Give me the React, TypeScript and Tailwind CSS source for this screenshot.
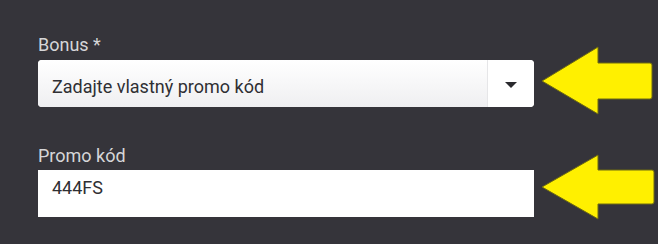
function Arrows() {
  return (
    <svg
      className="pointer-events-none absolute left-0 top-0"
      width="658"
      height="244"
      viewBox="0 0 658 244"
      aria-hidden="true"
    >
      <path
        d="M542 81 L598 47 L598 63 L650 63 Q652 63 652 65 L652 97 Q652 99 650 99 L598 99 L598 114 Z"
        fill="#fff000"
        stroke="#6e6a10"
        strokeWidth="1"
        strokeLinejoin="round"
      />
      <path
        d="M542 187 L598 155 L598 170 L652 170 Q654 170 654 172 L654 202 Q654 204 652 204 L598 204 L598 219 Z"
        fill="#fff000"
        stroke="#6e6a10"
        strokeWidth="1"
        strokeLinejoin="round"
      />
    </svg>
  );
}

export default function App() {
  return (
    <main
      className="relative h-[244px] w-[658px] overflow-hidden bg-[#35343a] pl-[38px] pt-[33px]"
      style={{ fontFamily: "Roboto, 'Liberation Sans', sans-serif" }}
    >
      {/* Bonus select */}
      <div className="flex flex-col gap-[3px]">
        <label className="text-[18px] leading-6 text-[#d6d6d8]">Bonus *</label>
        <div className="flex h-[47px] w-[496px] overflow-hidden rounded-[4px] bg-white">
          <div className="flex flex-1 items-start bg-gradient-to-b from-white to-[#efeff1] pl-[14px] pt-[15px] text-[18px] leading-6 text-[#2f2f33]">
            Zadajte vlastný promo kód
          </div>
          <div className="flex w-[47px] items-center justify-center border-l border-[#e6e6e8] bg-white">
            <span className="mt-[3px] h-0 w-0 border-x-[6px] border-t-[6px] border-x-transparent border-t-[#2a2a2e]" />
          </div>
        </div>
      </div>

      {/* Promo code */}
      <div className="mt-[37px] flex flex-col gap-[2px]">
        <label className="text-[18px] leading-6 text-[#d6d6d8]">Promo kód</label>
        <div className="flex h-[47px] w-[496px] items-start bg-white pl-[14px] pt-[6px] text-[18px] leading-6 text-[#2f2f33]">
          444FS
        </div>
      </div>

      <Arrows />
    </main>
  );
}
